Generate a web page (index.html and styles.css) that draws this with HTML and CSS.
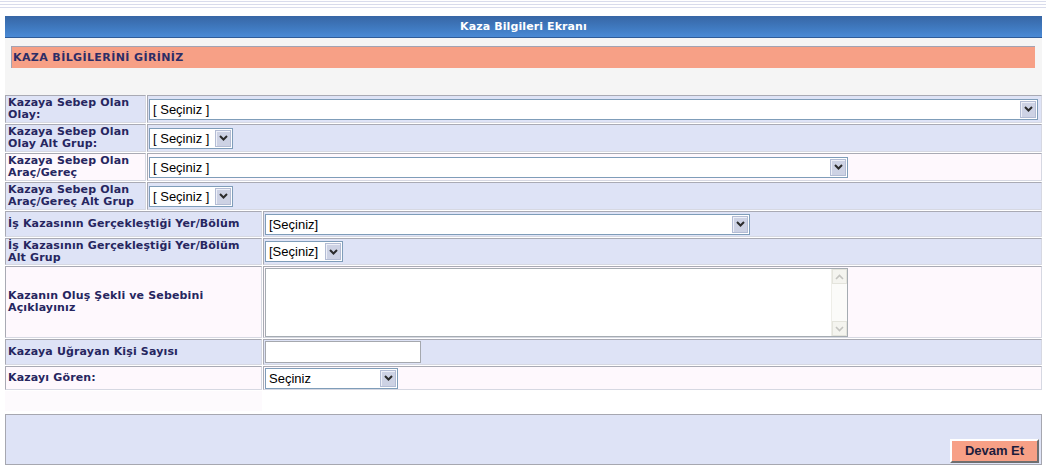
FILE: index.html
```html
<!DOCTYPE html>
<html lang="tr">
<head>
<meta charset="utf-8">
<title>Kaza Bilgileri Ekranı</title>
<link rel="stylesheet" href="styles.css">
</head>
<body>
<div class="stripes"></div>
<div class="page">
  <div class="header">Kaza Bilgileri Ekranı</div>
  <div class="intro">
    <div class="section-title">KAZA BİLGİLERİNİ GİRİNİZ</div>
  </div>

  <div class="form form-a">
    <div class="row lav h28">
      <div class="label">Kazaya Sebep Olan<br>Olay:</div>
      <div class="field">
        <div class="sel w-889"><span class="sel-text">[ Seçiniz ]</span><span class="sel-btn"><svg width="9" height="6" viewBox="0 0 9 6"><path d="M1 1 L4.5 4.5 L8 1" fill="none" stroke="#2b2b2b" stroke-width="2"/></svg></span></div>
      </div>
    </div>
    <div class="row lav h28">
      <div class="label">Kazaya Sebep Olan<br>Olay Alt Grup:</div>
      <div class="field">
        <div class="sel w-84"><span class="sel-text">[ Seçiniz ]</span><span class="sel-btn"><svg width="9" height="6" viewBox="0 0 9 6"><path d="M1 1 L4.5 4.5 L8 1" fill="none" stroke="#2b2b2b" stroke-width="2"/></svg></span></div>
      </div>
    </div>
    <div class="row pink h28">
      <div class="label">Kazaya Sebep Olan<br>Araç/Gereç</div>
      <div class="field">
        <div class="sel w-699"><span class="sel-text">[ Seçiniz ]</span><span class="sel-btn"><svg width="9" height="6" viewBox="0 0 9 6"><path d="M1 1 L4.5 4.5 L8 1" fill="none" stroke="#2b2b2b" stroke-width="2"/></svg></span></div>
      </div>
    </div>
    <div class="row lav h28">
      <div class="label">Kazaya Sebep Olan<br>Araç/Gereç Alt Grup</div>
      <div class="field">
        <div class="sel w-84"><span class="sel-text">[ Seçiniz ]</span><span class="sel-btn"><svg width="9" height="6" viewBox="0 0 9 6"><path d="M1 1 L4.5 4.5 L8 1" fill="none" stroke="#2b2b2b" stroke-width="2"/></svg></span></div>
      </div>
    </div>
  </div>

  <div class="form form-b">
    <div class="row lav h26">
      <div class="label">İş Kazasının Gerçekleştiği Yer/Bölüm</div>
      <div class="field">
        <div class="sel w-485"><span class="sel-text">[Seçiniz]</span><span class="sel-btn"><svg width="9" height="6" viewBox="0 0 9 6"><path d="M1 1 L4.5 4.5 L8 1" fill="none" stroke="#2b2b2b" stroke-width="2"/></svg></span></div>
      </div>
    </div>
    <div class="row lav h27">
      <div class="label">İş Kazasının Gerçekleştiği Yer/Bölüm<br>Alt Grup</div>
      <div class="field">
        <div class="sel w-78"><span class="sel-text">[Seçiniz]</span><span class="sel-btn"><svg width="9" height="6" viewBox="0 0 9 6"><path d="M1 1 L4.5 4.5 L8 1" fill="none" stroke="#2b2b2b" stroke-width="2"/></svg></span></div>
      </div>
    </div>
    <div class="row pink h72">
      <div class="label">Kazanın Oluş Şekli ve Sebebini<br>Açıklayınız</div>
      <div class="field">
        <div class="textarea">
          <div class="ta-body"></div>
          <div class="ta-scroll">
            <span class="ta-arrow"><svg width="9" height="6" viewBox="0 0 9 6"><path d="M1 5 L4.5 1.5 L8 5" fill="none" stroke="#c4c4c0" stroke-width="1.6"/></svg></span>
            <span class="ta-arrow"><svg width="9" height="6" viewBox="0 0 9 6"><path d="M1 1 L4.5 4.5 L8 1" fill="none" stroke="#c4c4c0" stroke-width="1.6"/></svg></span>
          </div>
        </div>
      </div>
    </div>
    <div class="row lav h26">
      <div class="label">Kazaya Uğrayan Kişi Sayısı</div>
      <div class="field">
        <div class="text-input"></div>
      </div>
    </div>
    <div class="row pink h24">
      <div class="label">Kazayı Gören:</div>
      <div class="field">
        <div class="sel w-133"><span class="sel-text">Seçiniz</span><span class="sel-btn"><svg width="9" height="6" viewBox="0 0 9 6"><path d="M1 1 L4.5 4.5 L8 1" fill="none" stroke="#2b2b2b" stroke-width="2"/></svg></span></div>
      </div>
    </div>
    <div class="spacer-row">
      <div class="spacer-cell"></div>
    </div>
  </div>

  <div class="actions">
    <button class="btn" type="button">Devam Et</button>
  </div>
</div>
</body>
</html>
```

FILE: styles.css
```css
* { box-sizing: border-box; }

html, body {
  margin: 0;
  padding: 0;
  background: #ffffff;
}

body {
  font-family: "DejaVu Sans", Verdana, sans-serif;
  font-size: 11px;
  color: #2a2a62;
}

.stripes {
  height: 9px;
  background: repeating-linear-gradient(to bottom, #ffffff 0, #ffffff 1px, #d9dcec 1px, #d9dcec 2px, #ffffff 2px, #ffffff 3px);
}

.page {
  width: 1037px;
  margin: 7px 0 0 5px;
}

.header {
  height: 22px;
  background: linear-gradient(to bottom, #3766a5 0%, #3f79bf 55%, #4a8ad5 100%);
  border-bottom: 1px solid #2f5c99;
  color: #ffffff;
  font-weight: bold;
  font-size: 11px;
  letter-spacing: 0.1px;
  text-align: center;
  line-height: 21px;
}

.intro {
  height: 57px;
  background: #f5f5f5;
  padding: 8px 7px 0 6px;
}

.section-title {
  height: 22px;
  background: #f7a086;
  border-top: 1px solid #a3a3b3;
  border-left: 1px solid #a3a3b3;
  padding-left: 1px;
  line-height: 21px;
  font-weight: bold;
  font-size: 11px;
  letter-spacing: 0.4px;
  color: #2d2d66;
}

.form {
  display: flex;
  flex-direction: column;
  gap: 1px;
}

.form-b {
  margin-top: 1px;
}

.row {
  display: grid;
  column-gap: 1px;
}

.form-a .row { grid-template-columns: 141px 1fr; }
.form-b .row { grid-template-columns: 257px 1fr; }

.h24 { height: 24px; }
.h26 { height: 26px; }
.h27 { height: 27px; }
.h28 { height: 28px; }
.h72 { height: 72px; }

.label,
.field {
  display: flex;
  align-items: center;
  border-style: solid;
  border-width: 1px;
  border-color: #a9aab4 #d6d8e2 #d6d8e2 #a9aab4;
}

.label {
  padding-left: 2px;
  font-weight: bold;
  font-size: 11px;
  line-height: 12px;
  letter-spacing: 0.15px;
  color: #262660;
  white-space: nowrap;
}

.field {
  padding-left: 1px;
}

.lav .label,
.lav .field { background: #dee3f6; }

.pink .label,
.pink .field { background: #fef8fd; }

/* select look-alike */
.sel {
  display: flex;
  height: 21px;
  border: 1px solid #7f9db9;
  background: #ffffff;
}

.w-889 { width: 889px; }
.w-699 { width: 699px; }
.w-485 { width: 485px; }
.w-133 { width: 133px; }
.w-84 { width: 84px; }
.w-78 { width: 78px; }

.sel-text {
  flex: 1;
  padding-left: 3px;
  font-family: "Liberation Sans", Arial, sans-serif;
  font-size: 13px;
  line-height: 19px;
  color: #000000;
  white-space: nowrap;
  overflow: hidden;
}

.sel-btn {
  width: 16px;
  margin: 1px;
  display: flex;
  align-items: center;
  justify-content: center;
  background: #cdd2e4;
  border: 1px solid #b3bcd4;
  box-shadow: inset 1px 1px 0 #eef0f8;
}

/* textarea look-alike */
.textarea {
  display: flex;
  width: 583px;
  height: 69px;
  margin-top: 1px;
  border: 1px solid #a5acb2;
  background: #ffffff;
}

.ta-body { flex: 1; }

.ta-scroll {
  width: 16px;
  display: flex;
  flex-direction: column;
  justify-content: space-between;
  background: #fbfbf9;
  border-left: 1px solid #eeeee8;
}

.ta-arrow {
  height: 15px;
  display: flex;
  align-items: center;
  justify-content: center;
  background: #f4f4ef;
  border: 1px solid #e4e4dc;
}

.text-input {
  width: 156px;
  height: 22px;
  border: 1px solid #a5a8ae;
  background: #ffffff;
}

.spacer-row {
  display: grid;
  grid-template-columns: 257px 1fr;
  height: 20px;
}

.spacer-cell {
  background: #fdfafd;
}

.actions {
  margin-top: 3px;
  height: 51px;
  background: #dee3f6;
  border: 1px solid #a6a7b0;
  display: flex;
  justify-content: flex-end;
  align-items: flex-end;
  padding: 0 2px 1px 0;
}

.btn {
  width: 89px;
  height: 24px;
  background: #f7a086;
  border-style: solid;
  border-width: 2px;
  border-color: #ffffff #6f6f6f #6f6f6f #ffffff;
  font-family: "Liberation Sans", Arial, sans-serif;
  font-weight: bold;
  font-size: 13px;
  color: #1c1c3c;
  padding: 0;
  line-height: 20px;
}
```
